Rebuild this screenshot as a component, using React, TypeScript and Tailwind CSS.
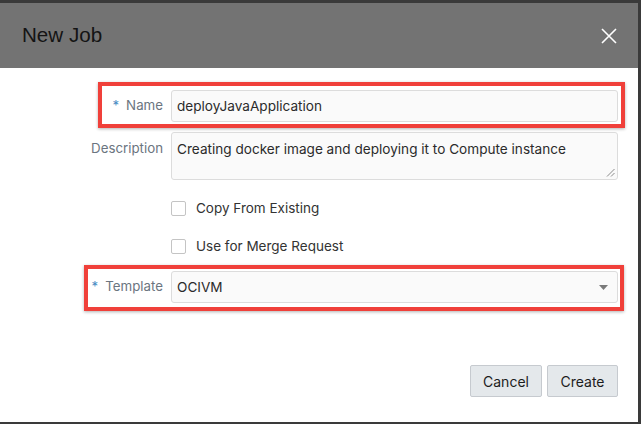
import React from "react";

function Checkbox({ label }: { label: string }) {
  return (
    <div className="flex items-center h-[15px]">
      <div className="w-[15px] h-[15px] rounded-[2px] border border-[#c4c4c4] bg-white" />
      <span className="ml-[10px] text-[13.5px] text-[#333]">{label}</span>
    </div>
  );
}

export default function App() {
  return (
    <div
      className="w-[641px] h-[424px] bg-[#3a3a3a] pt-[3px] pr-[3px] pb-[2px]"
      style={{ fontFamily: "Inter, 'Liberation Sans', sans-serif" }}
    >
      <div className="h-full bg-white flex flex-col">
        <div className="h-[65px] shrink-0 bg-[#737373] flex items-center justify-between pl-[22px] pr-[21px]">
          <span
            className="text-[20.6px] text-[#141414]"
            style={{ fontFamily: "'Liberation Sans', Arial, sans-serif" }}
          >
            New Job
          </span>
          <svg width="16" height="16" viewBox="0 0 16 16" fill="none">
            <path d="M1 1L15 15M15 1L1 15" stroke="#ffffff" strokeWidth="1.6" />
          </svg>
        </div>

        <div className="relative flex-1 pt-[22px] pr-[20px]">
          <div className="grid grid-cols-[163px_1fr] gap-x-[8px]">
            {/* Name */}
            <div className="flex items-center justify-end h-[32px] text-[13.3px] text-[#6b7580]">
              <span className="text-[#4a8cc4] mr-[7px]">*</span>Name
            </div>
            <div className="h-[32px] rounded-[3px] border border-[#dcdcdc] bg-[#fafafa] flex items-center px-[5px] text-[13.6px] text-[#2b2b2b]">
              deployJavaApplication
            </div>

            {/* Description */}
            <div className="mt-[10px] pt-[7px] text-right text-[13.3px] text-[#6b7580] leading-[18px]">
              Description
            </div>
            <div className="mt-[10px] relative h-[48px] rounded-[3px] border border-[#dcdcdc] bg-[#fafafa] px-[5px] pt-[7px] text-[13.6px] text-[#2b2b2b] leading-[18px]">
              Creating docker image and deploying it to Compute instance
              <svg
                className="absolute right-[2px] bottom-[2px]"
                width="9"
                height="9"
                viewBox="0 0 9 9"
              >
                <path d="M8.5 1L1 8.5M8.5 5L5 8.5" stroke="#8a8a8a" strokeWidth="1" />
              </svg>
            </div>

            {/* Checkboxes */}
            <div />
            <div className="mt-[21px]">
              <Checkbox label="Copy From Existing" />
            </div>
            <div />
            <div className="mt-[23px]">
              <Checkbox label="Use for Merge Request" />
            </div>

            {/* Template */}
            <div className="mt-[17px] flex items-center justify-end h-[32px] text-[13.3px] text-[#6b7580]">
              <span className="text-[#4a8cc4] mr-[7px]">*</span>Template
            </div>
            <div className="mt-[17px] h-[32px] rounded-[3px] border border-[#dcdcdc] bg-[#fafafa] flex items-center justify-between pl-[5px] pr-[9px] text-[13.6px] text-[#2b2b2b]">
              <span>OCIVM</span>
              <svg width="9" height="5" viewBox="0 0 9 5">
                <path d="M0 0H9L4.5 5Z" fill="#7a7a7a" />
              </svg>
            </div>
          </div>

          <div className="flex justify-end gap-[5px] mt-[62px]">
            <button className="w-[72px] h-[32px] rounded-[2px] border border-[#c6cacf] bg-[#e4e8eb] text-[14px] text-[#1c1c1c]">
              Cancel
            </button>
            <button className="w-[71px] h-[32px] rounded-[2px] border border-[#c6cacf] bg-[#e4e8eb] text-[14px] text-[#1c1c1c]">
              Create
            </button>
          </div>

          {/* Annotation highlights */}
          <div className="absolute left-[98px] top-[14px] w-[527px] h-[46px] border-[4px] border-[#f0403a] shadow-[0_1px_3px_rgba(0,0,0,0.3)] pointer-events-none" />
          <div className="absolute left-[84px] top-[197px] w-[540px] h-[46px] border-[4px] border-[#f0403a] shadow-[0_1px_3px_rgba(0,0,0,0.3)] pointer-events-none" />
        </div>
      </div>
    </div>
  );
}
